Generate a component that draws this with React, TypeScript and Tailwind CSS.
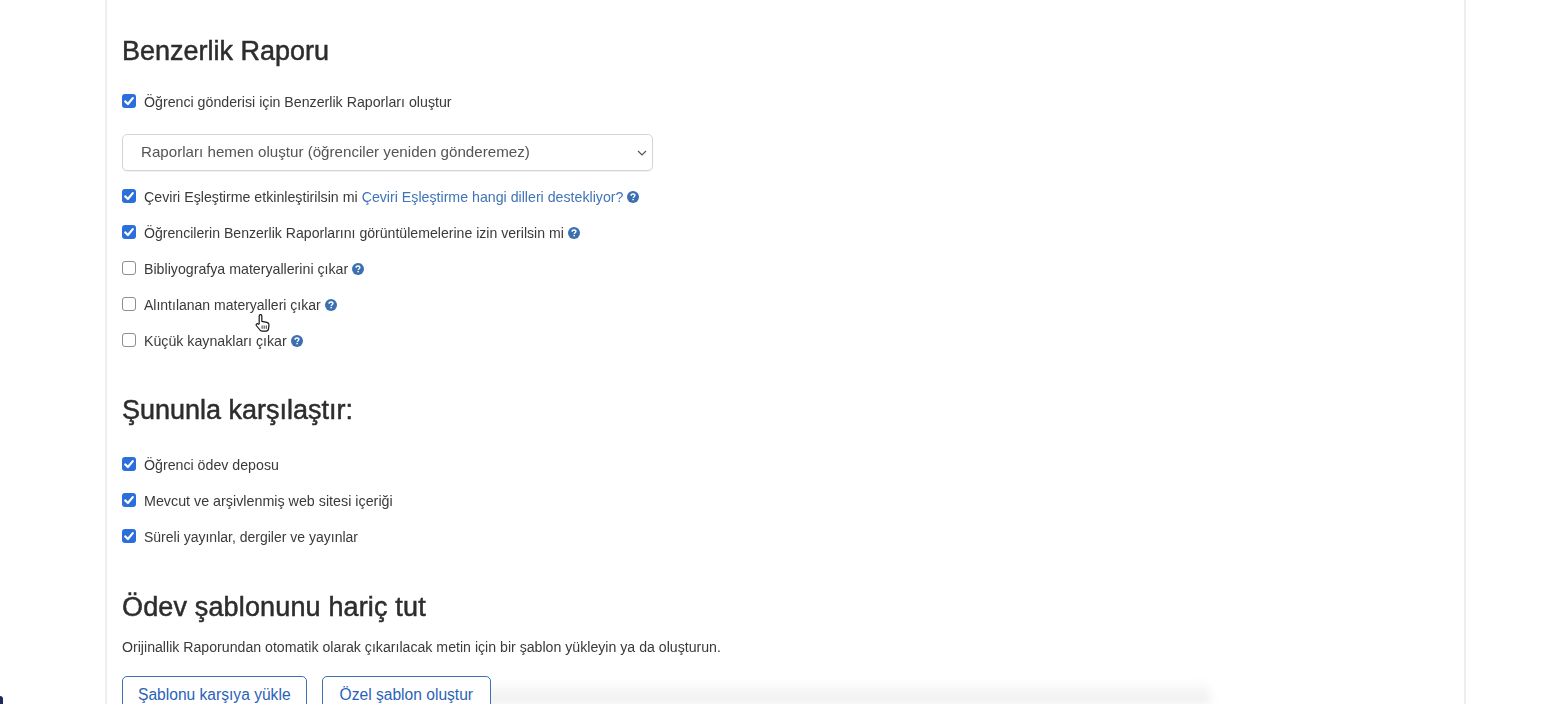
import React from "react";

const Check = ({ on }: { on: boolean }) =>
  on ? (
    <span className="flex h-[14px] w-[14px] shrink-0 items-center justify-center rounded-[3px] bg-[#2b6fdc]">
      <svg viewBox="0 0 14 14" className="h-[14px] w-[14px]" fill="none" stroke="#fff" strokeWidth="2.2" strokeLinecap="round" strokeLinejoin="round">
        <path d="M3.2 7.4 L5.9 10 L10.8 4.1" />
      </svg>
    </span>
  ) : (
    <span className="block h-[14px] w-[14px] shrink-0 rounded-[3px] border border-[#8e8e8e] bg-white" />
  );

const Help = () => (
  <svg viewBox="0 0 12 12" className="ml-1 h-3 w-3 shrink-0">
    <circle cx="6" cy="6" r="6" fill="#3b6fb0" />
    <path d="M4.1 4.7 C4.1 3.500 5 3 6 3 C7.1 3 7.9 3.6 7.9 4.6 C7.9 5.7 6.2 5.8 6.2 7" fill="none" stroke="#fff" strokeWidth="1.4" />
    <rect x="5.400" y="7.900" width="1.5" height="1.4" fill="#fff" />
  </svg>
);

const Row = ({ on, className, children }: { on: boolean; className?: string; children: React.ReactNode }) => (
  <div className={"flex h-9 items-center leading-5 text-[#3a3a3a] " + (className ?? "text-[14.2px]")}>
    <span className="-mt-[4px] block shrink-0"><Check on={on} /></span>
    <div className="-mt-[2px] ml-2 flex items-center">{children}</div>
  </div>
);

const H2 = ({ children, className }: { children: React.ReactNode; className: string }) => (
  <h2 className={"text-[27px] leading-8 font-medium text-[#2d2d2d] [-webkit-text-stroke:0.5px_#2d2d2d] " + className}>{children}</h2>
);

const Btn = ({ className, children }: { className: string; children: React.ReactNode }) => (
  <button className={"relative h-10 rounded-[5px] border border-[#3f6fb5] bg-white pb-[2px] text-[15.6px] font-medium whitespace-nowrap text-[#2a62b8] " + className}>
    {children}
  </button>
);

export default function App() {
  return (
    <div className="relative h-[704px] w-[1565px] overflow-hidden bg-white font-['Liberation_Sans',Arial,sans-serif]">
      <div className="absolute bottom-0 left-[480px] h-6 w-[730px] bg-gradient-to-b from-transparent to-[#ececed] blur-[5px]" />
      <main className="relative ml-[105px] h-full w-[1361px] border-x-2 border-[#eeeeee] pl-[15px] blur-[0.4px]">
        <H2 className="pt-[35px]">Benzerlik Raporu</H2>
        <div className="mt-[18px]">
          <Row on>Öğrenci gönderisi için Benzerlik Raporları oluştur</Row>
        </div>
        <div className="mt-[13px] mb-[9px] flex h-[37px] w-[531px] items-center justify-between rounded-[5px] border border-[#d4d4d4] pr-[5px] pl-[18px] text-[15.15px] text-[#555555] shadow-[0_1px_1px_rgba(0,0,0,0.06)]">
          <span>Raporları hemen oluştur (öğrenciler yeniden gönderemez)</span>
          <svg viewBox="0 0 10 6" className="h-[6px] w-[10px]" fill="none" stroke="#555" strokeWidth="1.2"><path d="M1 1l4 4 4-4" /></svg>
        </div>
        <Row on>
          Çeviri Eşleştirme etkinleştirilsin mi
          <span className="ml-1 text-[#3f74b8]">Çeviri Eşleştirme hangi dilleri destekliyor?</span>
          <Help />
        </Row>
        <Row on className="text-[14.1px]">Öğrencilerin Benzerlik Raporlarını görüntülemelerine izin verilsin mi<Help /></Row>
        <Row on={false}>Bibliyografya materyallerini çıkar<Help /></Row>
        <Row on={false} className="text-[14px]">Alıntılanan materyalleri çıkar<Help /></Row>
        <Row on={false}>Küçük kaynakları çıkar<Help /></Row>
        <H2 className="mt-[34px]">Şununla karşılaştır:</H2>
        <div className="mt-[22px]">
          <Row on>Öğrenci ödev deposu</Row>
          <Row on className="text-[14.3px]">Mevcut ve arşivlenmiş web sitesi içeriği</Row>
          <Row on className="text-[14px]">Süreli yayınlar, dergiler ve yayınlar</Row>
        </div>
        <H2 className="mt-[35px] tracking-[0.15px]">Ödev şablonunu hariç tut</H2>
        <p className="mt-[14px] text-[14.15px] leading-5 text-[#3a3a3a]">Orijinallik Raporundan otomatik olarak çıkarılacak metin için bir şablon yükleyin ya da oluşturun.</p>
        <div className="mt-[19px] flex gap-[15px]">
          <Btn className="px-[15px]">Şablonu karşıya yükle</Btn>
          <Btn className="px-[17px]">Özel şablon oluştur</Btn>
        </div>
      </main>
      <svg viewBox="0 0 20 24" className="absolute top-[313px] left-[254px] h-[20px] w-[17px]" fill="#fff" stroke="#111" strokeWidth="1.4" strokeLinejoin="round">
        <path d="M6 13V3.5a1.6 1.6 0 0 1 3.2 0V10l6 1.2c1.6.4 2.6 1.3 2.6 3l-.5 4.2c-.3 1.8-1.3 3.4-3 3.4H9.500c-1.3 0-2.3-.8-3-2L2.500 15c-.8-1.4 1.2-3 2.500-1.700z" />
        <path d="M9.500 15v4M12 15v4M14.500 15v4" fill="none" strokeWidth="1" />
      </svg>
      <div className="absolute bottom-0 left-0 h-2 w-[3px] rounded-tr-full bg-[#1b2a5a]" />
    </div>
  );
}
